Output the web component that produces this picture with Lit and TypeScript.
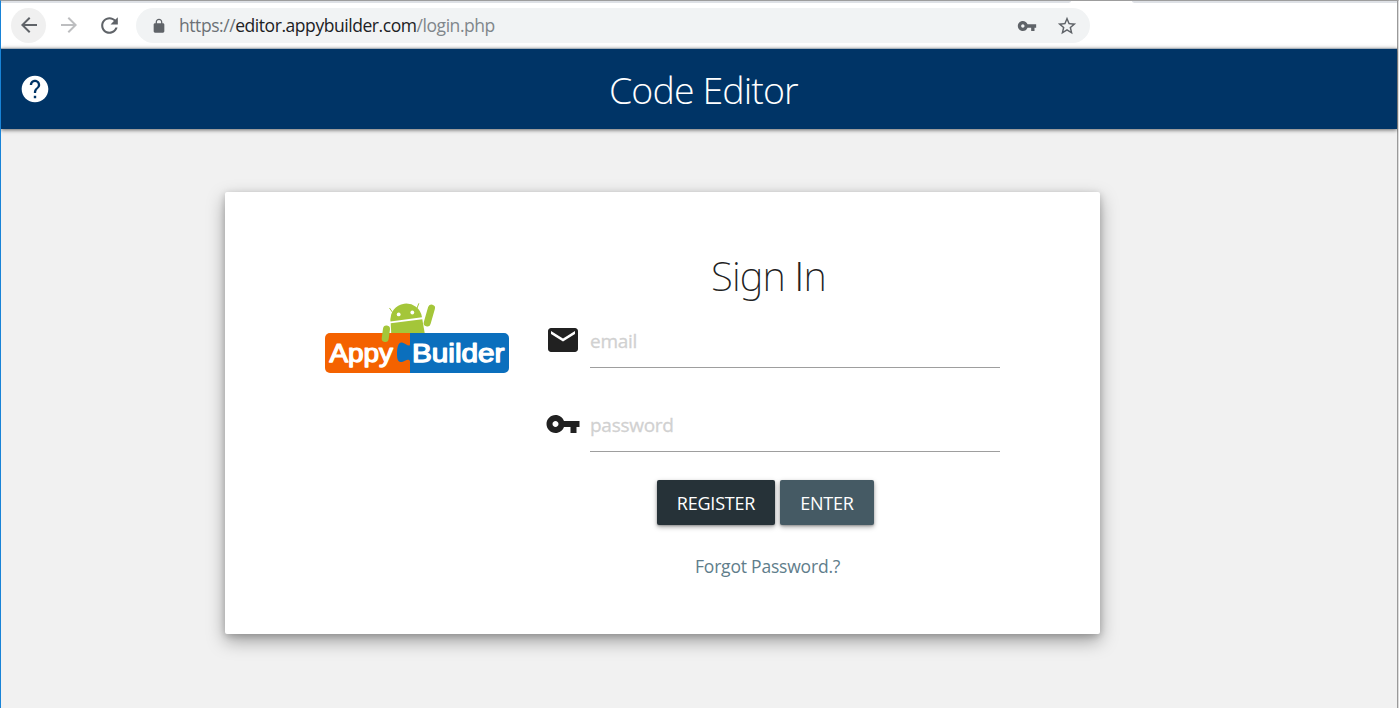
import { LitElement, html, css, svg } from "lit";
import { customElement, property } from "lit/decorators.js";

const icons: Record<string, string> = {
  back: "M20 11H7.83l5.59-5.59L12 4l-8 8 8 8 1.41-1.41L7.83 13H20v-2z",
  forward: "M12 4l-1.41 1.41L16.17 11H4v2h12.17l-5.58 5.59L12 20l8-8z",
  reload:
    "M17.65 6.35C16.2 4.9 14.21 4 12 4c-4.42 0-7.99 3.58-7.99 8s3.57 8 7.99 8c3.73 0 6.84-2.55 7.73-6h-2.08c-.82 2.33-3.04 4-5.65 4-3.31 0-6-2.69-6-6s2.69-6 6-6c1.66 0 3.14.69 4.22 1.78L13 11h7V4l-2.35 2.35z",
  lock: "M18 8h-1V6c0-2.76-2.24-5-5-5S7 3.24 7 6v2H6c-1.1 0-2 .9-2 2v10c0 1.1.9 2 2 2h12c1.1 0 2-.9 2-2V10c0-1.1-.9-2-2-2zM8.9 8V6c0-1.71 1.39-3.1 3.1-3.1s3.1 1.39 3.1 3.1v2z",
  key: "M12.65 10C11.83 7.67 9.61 6 7 6c-3.31 0-6 2.69-6 6s2.69 6 6 6c2.61 0 4.83-1.67 5.65-4H17v4h4v-4h2v-4H12.65zM7 14c-1.1 0-2-.9-2-2s.9-2 2-2 2 .9 2 2-.9 2-2 2z",
  star: "M22 9.24l-7.19-.62L12 2 9.19 8.63 2 9.24l5.46 4.73L5.82 21 12 17.27 18.18 21l-1.63-7.03L22 9.24zM12 15.4l-3.76 2.27 1-4.28-3.32-2.88 4.38-.38L12 6.1l1.71 4.04 4.38.38-3.32 2.88 1 4.28L12 15.4z",
  help: "M12 2C6.48 2 2 6.48 2 12s4.48 10 10 10 10-4.48 10-10S17.52 2 12 2zm.9 17h-1.800v-1.900h1.800v1.900zm2.100-7.900l-.9.92C13.300 12.900 12.850 13.500 12.850 15h-1.700v-.5c0-1.1.45-2.1 1.17-2.83l1.240-1.260c.37-.36.59-.86.59-1.410 0-1.200-.950-2.200-2.150-2.200s-2.150 1-2.150 2.200H8.100c0-2.210 1.740-3.900 3.900-3.900s3.900 1.740 3.900 3.900c0 .88-.36 1.550-.9 2.100z",
  mail: "M20 4H4c-1.1 0-1.99.9-1.99 2L2 18c0 1.1.9 2 2 2h16c1.1 0 2-.9 2-2V6c0-1.1-.9-2-2-2zm0 4l-8 5-8-5V6l8 5 8-5v2z",
};

@customElement("ui-icon")
export class UiIcon extends LitElement {
  static styles = css`
    :host { display: block; flex: none; width: 24px; height: 24px; }
    .glyph { display: block; width: 100%; height: 100%; fill: currentColor; }
  `;
  @property() name = "";
  render() {
    return html`<svg class="glyph" viewBox="0 0 24 24">${svg`<path d=${icons[this.name]}></path>`}</svg>`;
  }
}

@customElement("appy-logo")
export class AppyLogo extends LitElement {
  static styles = css`
    :host { display: block; width: 186px; height: 72px; }
    .logo { display: block; }
    .word { font: 400 25px "Liberation Sans", Arial, sans-serif; fill: #fff; stroke: #fff; stroke-width: 1.250; stroke-linejoin: round; stroke-linecap: round; }
  `;
  render() {
    return html`<svg class="logo" width="186" height="72" viewBox="324 302 186 72">
      <path fill="#f46200" d="M330 333h80v40h-80a5 5 0 0 1-5-5v-30a5 5 0 0 1 5-5z"/>
      <path fill="#0b6fbd" d="M410 333h94a5 5 0 0 1 5 5v30a5 5 0 0 1-5 5h-94v-12c-1-2-3-1.500-5-.3-5 2.800-8 1.500-8-6.200s1.500-12.500 5-12c3 .5 5.500 3.500 7.500 3 .3-.1.500-.6.500-1.300z"/>
      <g fill="#a4c639" stroke-linecap="round">
        <path d="M390.500 321.500a15.800 15.800 0 0 1 31.500-4.200z"/>
        <path d="M390.700 323.200l31.600-4 2.400 13.800h-33.500z"/>
        <path d="M389.700 308.300l3.200 4.500M418.700 303.700l-1.700 4.600" stroke="#a4c639" stroke-width="1"/>
        <path d="M386.500 329l-1.300 9.500M431.500 308l-4.300 15" stroke="#a4c639" stroke-width="7"/>
      </g>
      <circle cx="398.700" cy="314.400" r="1.900" fill="#fff"/>
      <circle cx="412.300" cy="312.500" r="1.900" fill="#fff"/>
      <text class="word" x="329.500" y="362" textLength="63.500" lengthAdjust="spacingAndGlyphs">Appy</text>
      <text class="word" x="412" y="362" textLength="92.500" lengthAdjust="spacingAndGlyphs">Builder</text>
    </svg>`;
  }
}

@customElement("app-root")
export class AppRoot extends LitElement {
  static styles = css`
    :host {
      display: block; box-sizing: border-box; width: 1399px; height: 708px; overflow: hidden;
      border-top: 1px solid #9d9d9d; border-left: 1px solid #1883d7; border-right: 1px solid #dcdcdc;
      background: #f1f1f1; font-family: "Open Sans", "Noto Sans", sans-serif; color: #212121;
    }
    .window { display: flex; flex-direction: column; height: 707px; box-sizing: border-box; border-right: 1px solid #9a9a9a; }
    .tabs { display: flex; justify-content: space-between; height: 2px; flex: none; background: #fff; }
    .strip { background: #dee1e6; }
    .strip-left { width: 1070px; border-bottom-right-radius: 4px 2px; }
    .strip-right { width: 265px; border-bottom-left-radius: 4px 2px; }
    .toolbar { display: flex; align-items: center; height: 45px; flex: none; box-sizing: border-box; padding-left: 10px; background: #fff; color: #5f6368; }
    .nav { display: grid; place-items: center; width: 36px; height: 35px; margin-right: 4px; padding-bottom: 1px; box-sizing: border-box; border-radius: 50%; }
    .nav-back { width: 35px; background: #f0f0f0; margin-right: 5px; }
    .nav-forward { color: #bdbec0; }
    .nav-reload { width: 37px; margin-right: 8px; }
    .i25 { width: 25px; height: 25px; }
    .omnibox { display: flex; align-items: center; width: 954px; height: 35px; box-sizing: border-box; padding: 0 12px 0 15px; border-radius: 18px; background: #f1f3f4; }
    .i-lock { width: 16px; height: 16px; margin-right: 12px; }
    .url { flex: 1; font-size: 17.500px; letter-spacing: -0.440px; line-height: 24px; padding-bottom: 2px; color: #80868b; white-space: nowrap; }
    .scheme { color: #6c7176; }
    .host { color: #202124; }
    .i-key { width: 20px; height: 20px; margin-right: 19px; }
    .i-star { width: 22px; height: 22px; }
    .header { display: flex; align-items: center; flex: none; height: 81px; box-sizing: border-box; border-top: 1px solid #a5afb9; padding-left: 18px; background: #003466; color: #fff; box-shadow: 0 1px 4px rgba(0,0,0,0.6); }
    .i-help { width: 32px; height: 32px; }
    .title { margin: 1px 0 0 558px; font-size: 37.500px; font-weight: 300; line-height: 50px; letter-spacing: -0.900px; white-space: nowrap; }
    .page { flex: 1; padding: 63px 0 0 224px; }
    .card { display: flex; width: 875px; height: 442px; box-sizing: border-box; padding: 55px 100px 0; border-radius: 2px; background: #fff; box-shadow: 0 7px 18px rgba(0,0,0,0.34), 0 2px 7px rgba(0,0,0,0.18); }
    .logo { margin: 55px 35px 0 -1px; flex: none; }
    .form { display: flex; flex-direction: column; width: 455px; }
    .signin { margin: 0; height: 57px; line-height: 57px; text-align: center; font-family: "Noto Sans", "Open Sans", sans-serif; font-size: 40px; font-weight: 200; letter-spacing: -0.900px; padding-right: 8px; }
    .plain-cap { font-family: "Open Sans", sans-serif; font-weight: 300; }
    .field { display: flex; gap: 9px; height: 64px; margin-bottom: 20px; }
    .i-field { width: 36px; height: 36px; margin-top: 18px; }
    .input { flex: 1; border: 0; border-bottom: 1px solid #9e9e9e; padding: 10px 0 0; outline: none; background: transparent; font: 19px "Open Sans", "Noto Sans", sans-serif; letter-spacing: -0.270px; color: #212121; box-sizing: border-box; height: 64px; }
    .input::placeholder { color: #d1d1d1; opacity: 1; -webkit-text-stroke: 0.300px #d1d1d1; }
    .actions { display: flex; gap: 5px; margin: 8px 0 0 112px; }
    .btn { height: 45px; padding: 0; border: 0; border-radius: 2px; color: #fff; font: 18px "Open Sans", "Noto Sans", sans-serif; letter-spacing: -0.200px; box-shadow: 0 2px 5px rgba(0,0,0,0.35), 0 1px 2px rgba(0,0,0,0.2); }
    .register { width: 118px; background: #263238; }
    .enter { width: 94px; background: #455a64; }
    .forgot { margin: 28px 0 0 150px; font-size: 17.500px; line-height: 26px; color: #607d8b; white-space: nowrap; text-decoration: none; letter-spacing: -0.200px; }
  `;
  render() {
    return html`<div class="window">
      <div class="tabs"><div class="strip strip-left"></div><div class="strip strip-right"></div></div>
      <nav class="toolbar">
        <span class="nav nav-back"><ui-icon name="back"></ui-icon></span>
        <span class="nav nav-forward"><ui-icon name="forward"></ui-icon></span>
        <span class="nav nav-reload"><ui-icon class="i25" name="reload"></ui-icon></span>
        <div class="omnibox">
          <ui-icon class="i-lock" name="lock"></ui-icon>
          <span class="url"><span class="scheme">https://</span><span class="host">editor.appybuilder.com</span>/login.php</span>
          <ui-icon class="i-key" name="key"></ui-icon>
          <ui-icon class="i-star" name="star"></ui-icon>
        </div>
      </nav>
      <header class="header">
        <ui-icon class="i-help" name="help"></ui-icon>
        <div class="title">Code Editor</div>
      </header>
      <main class="page">
        <section class="card">
          <appy-logo class="logo"></appy-logo>
          <div class="form">
            <h1 class="signin">Sign <span class="plain-cap">I</span>n</h1>
            <label class="field"><ui-icon class="i-field" name="mail"></ui-icon><input class="input" type="email" placeholder="email" /></label>
            <label class="field"><ui-icon class="i-field" name="key"></ui-icon><input class="input" type="password" placeholder="password" /></label>
            <div class="actions"><button class="btn register">REGISTER</button><button class="btn enter">ENTER</button></div>
            <a class="forgot">Forgot Password.?</a>
          </div>
        </section>
      </main>
    </div>`;
  }
}
